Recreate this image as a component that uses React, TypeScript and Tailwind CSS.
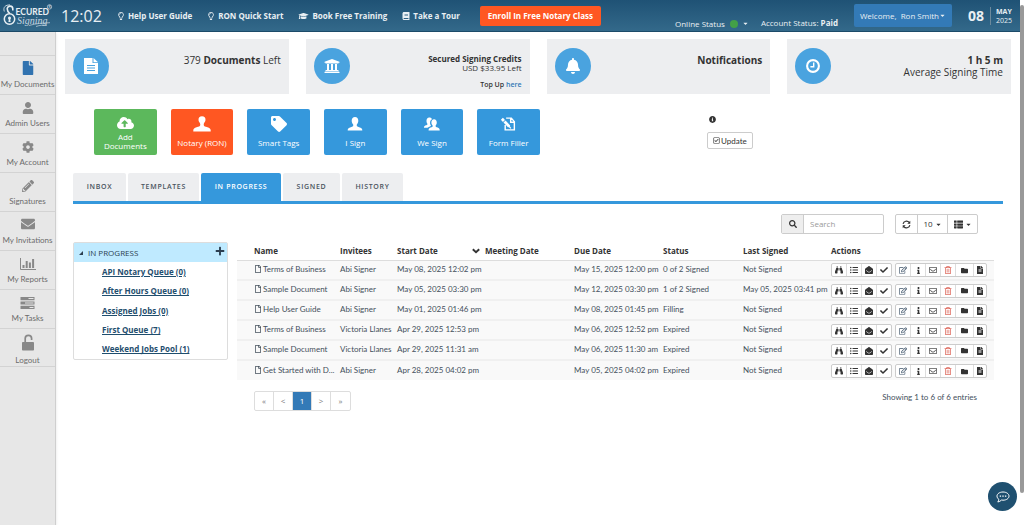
import type { ReactNode } from "react";
import type { IconType } from "react-icons";
import {
  FaBell, FaBinoculars, FaBook, FaCaretDown, FaCheck, FaCloudUploadAlt, FaCog, FaEnvelope,
  FaEnvelopeOpen, FaFile, FaFileAlt, FaFolder, FaGraduationCap, FaInfo, FaInfoCircle, FaListUl,
  FaPencilAlt, FaPlus, FaRegCheckSquare, FaRegEdit, FaRegEnvelope, FaRegFile, FaRegLightbulb,
  FaRegTrashAlt, FaSearch, FaTag, FaThList, FaUniversity, FaUser,
} from "react-icons/fa";

/* ---------- drawings ---------- */

function Logo() {
  return (
    <svg viewBox="0 0 50 24" className="h-6 w-[50px] shrink-0" role="img" aria-label="Secured Signing">
      <g fill="none" stroke="#e8eff3">
        <path d="M9.800 6.500V5a2.800 2.800 0 0 0-5.600-.2c0 2 .8 3.200 2.600 4.700" strokeWidth="1.600" />
        <path d="M1.300 7.500C-.2 3.200 2.500.8 7 .9" strokeWidth=".8" />
        <circle cx="6.500" cy="15" r="5.200" strokeWidth="1.500" />
        <circle cx="46.500" cy="2.900" r="2.200" strokeWidth=".6" />
        <path d="M26 21.500c7-2.200 14-2.300 21-2.800M33 22.500c4-1.400 7-1.500 11-1.200" strokeWidth=".6" />
      </g>
      <circle cx="6.500" cy="14" r="1.500" fill="#e8eff3" />
      <path d="M5.900 14.500h1.200l.5 3.500H5.400z" fill="#e8eff3" />
      <text x="12.500" y="11" fontSize="8.500" fill="#e8eff3" fontFamily="Lato, sans-serif" fontWeight="700">ECURED</text>
      <text x="14" y="20" fontSize="10" fill="#c6d6e0" fontFamily="Liberation Serif, serif" fontStyle="italic">Signing</text>
      <text x="45.400" y="4.200" fontSize="3.500" fill="#e8eff3" fontFamily="Lato, sans-serif">R</text>
    </svg>
  );
}

function DocIcon({ className }: { className?: string }) {
  return (
    <svg viewBox="0 0 16 16" className={className} aria-hidden="true">
      <path fillRule="evenodd" fill="currentColor" d="M1 0h8.500v5H15v11H1zM4 7v1h8V7zM4 9.500v1h8v-1zM4 12v1h8v-1z" />
      <path fill="currentColor" d="M10.500 0L15 4.200h-4.500z" />
    </svg>
  );
}

function StampIcon({ className }: { className?: string }) {
  return (
    <svg viewBox="0 0 18 16" className={className} fill="currentColor" aria-hidden="true">
      <path d="M9 .3a3.600 3.600 0 0 1 3.500 3.700c0 1.700-1.800 2.700-1.800 4.700 0 1.600 1.600 2 3.800 2.500 2 .5 3.200 1.500 3.200 3.200v1.200H.3v-1.200c0-1.700 1.200-2.700 3.200-3.200C5.700 10.700 7.300 10.300 7.300 8.700c0-2-1.800-3-1.800-4.700A3.600 3.600 0 0 1 9 .3z" />
    </svg>
  );
}

function PersonIcon({ className }: { className?: string }) {
  return (
    <svg viewBox="0 0 16 16" className={className} fill="currentColor" aria-hidden="true">
      <path d="M8 1c2.100 0 3.300 1.500 3.300 3.800 0 1.500-.6 2.900-1.500 3.700v1.400c.5.800 2.800 1.100 4.300 2.100.8.500 1.200 1.100 1.200 2.500H.7c0-1.400.4-2 1.200-2.500 1.500-1 3.800-1.300 4.300-2.100V8.500C5.300 7.700 4.700 6.300 4.700 4.800 4.700 2.500 5.900 1 8 1z" />
    </svg>
  );
}

function PeopleIcon({ className }: { className?: string }) {
  return (
    <svg viewBox="0 0 18 16" className={className} fill="currentColor" aria-hidden="true">
      <path d="M6.500 1C8 1 9.300 1.600 9.500 3 7.800 3.800 7.300 5.500 7.500 7.400c.1 1 .5 1.800 1 2.400-.6.900-2.700 1.200-3.700 2.100H1c0-1.400.6-1.900 2-2.500 1-.4 1.800-.8 1.800-1.500C4 7.200 3.700 5.900 3.700 4.600 3.700 2.300 4.800 1 6.500 1z" />
      <path d="M11.700 3c1.900 0 2.900 1.400 2.900 3.400 0 1.300-.5 2.400-1.200 3.100v1.100c.4.700 1.800.9 3.100 1.600.9.500 1.200 1.200 1.200 2.800H5.900c0-1.600.3-2.300 1.200-2.800 1.300-.7 2.700-.9 3.100-1.600V9.500C9.400 8.800 8.900 7.700 8.900 6.400 8.900 4.400 9.900 3 11.700 3z" />
    </svg>
  );
}

function FormIcon({ className }: { className?: string }) {
  return (
    <svg viewBox="0 0 18 16" className={className} fill="none" stroke="currentColor" aria-hidden="true">
      <path d="M5.500 9v5.200h9.700V5.500L12 1.800H6.500M11.300 2v4.200h3.900" strokeWidth="1.500" />
      <path d="M2 2.500l2.200 2.300M4.800 5.400l5 5.300" strokeWidth="3" />
      <path d="M9.500 10.400l2 2.200" strokeWidth="1.300" />
    </svg>
  );
}

function ClockIcon({ className }: { className?: string }) {
  return (
    <svg viewBox="0 0 16 16" className={className} fill="none" stroke="currentColor" aria-hidden="true">
      <circle cx="8" cy="8" r="5.900" strokeWidth="2.100" />
      <path d="M8.700 4.500v4.300H5.400" strokeWidth="1.400" />
    </svg>
  );
}

function ChartIcon({ className }: { className?: string }) {
  return (
    <svg viewBox="0 0 16 12" className={className} aria-hidden="true">
      <path d="M.5 0v11.500H16" fill="none" stroke="currentColor" />
      <path d="M2.500 7h2v3h-2zM5.700 3h2v7h-2zM8.900 4.500h2V10h-2zM12.100 1h2v9h-2z" fill="currentColor" />
    </svg>
  );
}

function TasksIcon({ className }: { className?: string }) {
  return (
    <svg viewBox="0 0 15 12" className={className} fill="currentColor" aria-hidden="true">
      <path fillRule="evenodd" d="M.5 0h14v3.200H.5zM8.500 1.100v1h5v-1zM.5 4.400h14v3.200H.5zM5 5.500v1h8.500v-1zM.5 8.800h14V12H.5zM9.500 9.900v1h4v-1z" />
    </svg>
  );
}

function UnlockIcon({ className }: { className?: string }) {
  return (
    <svg viewBox="0 0 14 17" className={className} aria-hidden="true">
      <path d="M4.200 9V4.500a3.200 3.200 0 0 1 6.400 0V6" fill="none" stroke="currentColor" strokeWidth="1.700" />
      <rect x="1" y="8" width="12" height="8.500" rx=".8" fill="currentColor" />
    </svg>
  );
}

function RefreshIcon({ className }: { className?: string }) {
  return (
    <svg viewBox="0 0 10 10" className={className} aria-hidden="true">
      <path d="M1.200 4.300A3.900 3.900 0 0 1 8 2.700M8.800 5.700A3.900 3.900 0 0 1 2 7.300" fill="none" stroke="currentColor" strokeWidth="1.300" />
      <path d="M9.200.8v3.300H5.900zM.8 9.200V5.900h3.300z" fill="currentColor" />
    </svg>
  );
}

function ChatIcon({ className }: { className?: string }) {
  return (
    <svg viewBox="0 0 14 12" className={className} fill="none" stroke="currentColor" strokeWidth="1" aria-hidden="true">
      <path d="M7 1c3.400 0 6 1.800 6 4.100S10.400 9.200 7 9.200c-.5 0-1-.1-1.400-.2C4.500 10 3.300 10.800 1.800 11c.6-.7.9-1.500 1-2.600C1.700 7.600 1 6.400 1 5.100 1 2.800 3.600 1 7 1z" />
      <path d="M3.700 5.100h1.400M6.300 5.100h1.400M8.900 5.100h1.400" strokeWidth="1.400" />
    </svg>
  );
}

function SortIcon({ className }: { className?: string }) {
  return (
    <svg viewBox="0 0 8 6" className={className} fill="none" stroke="currentColor" strokeWidth="1.900" aria-hidden="true">
      <path d="M.8 1.200L4 4.300l3.200-3.100" />
    </svg>
  );
}

/* ---------- header ---------- */

function NavLink({ icon: Icon, size = "size-2", children }: { icon: IconType; size?: string; children: ReactNode }) {
  return (
    <a href="#" className="flex items-center gap-[3px] text-[8px] font-bold whitespace-nowrap text-[#e9eff3]">
      <Icon className={size} />
      {children}
    </a>
  );
}

function Header() {
  return (
    <header className="flex h-8 items-center border-b border-[#1c4b69] bg-linear-to-b from-[#1f5275] to-[#33698a] pr-2 pl-[3px] text-[#e9eff3]">
      <Logo />
      <time className="ml-2 w-14 text-[16px]">12:02</time>
      <nav className="flex items-center gap-[15px]">
        <NavLink icon={FaRegLightbulb}>Help User Guide</NavLink>
        <NavLink icon={FaRegLightbulb}>RON Quick Start</NavLink>
        <NavLink icon={FaGraduationCap} size="h-2 w-[11px]">Book Free Training</NavLink>
        <NavLink icon={FaBook}>Take a Tour</NavLink>
      </nav>
      <button className="ml-5 h-5 w-[121px] rounded-xs bg-[#ff5722] text-[8px] font-bold whitespace-nowrap text-white">
        Enroll In Free Notary Class
      </button>
      <div className="ml-auto flex items-center whitespace-nowrap">
        <button className="mt-4 flex items-center text-[8px]">
          Online Status
          <span className="ml-[5px] size-2 rounded-full bg-[#43a047]" />
          <FaCaretDown className="ml-1 size-[7px]" />
        </button>
        <span className="mt-[14px] ml-3 text-[8px]">
          Account Status: <b>Paid</b>
        </span>
        <button className="ml-4 flex h-[23px] w-[98px] items-center justify-center rounded-xs bg-[#337ab7] text-[8px] whitespace-pre">
          Welcome,  Ron Smith
          <FaCaretDown className="size-[7px]" />
        </button>
        <span className="ml-4 text-[14px] font-bold">08</span>
        <span className="ml-[6px] flex flex-col border-l border-[#6d8a9c] pl-[5px] text-[7px] leading-[9px]">
          <b>MAY</b>
          <span>2025</span>
        </span>
      </div>
    </header>
  );
}

/* ---------- sidebar ---------- */

type Drawing = (props: { className?: string }) => ReactNode;

const MENU: { label: string; icon: Drawing; size: string }[] = [
  { label: "My Documents", icon: FaFile, size: "size-[14px] text-[#3173b0]" },
  { label: "Admin Users", icon: FaUser, size: "size-3 text-[#888]" },
  { label: "My Account", icon: FaCog, size: "size-3 text-[#888]" },
  { label: "Signatures", icon: FaPencilAlt, size: "size-3 text-[#888]" },
  { label: "My Invitations", icon: FaEnvelope, size: "size-[14px] text-[#888]" },
  { label: "My Reports", icon: ChartIcon, size: "h-3 w-4 text-[#888]" },
  { label: "My Tasks", icon: TasksIcon, size: "h-3 w-[15px] text-[#888]" },
  { label: "Logout", icon: UnlockIcon, size: "h-[17px] w-[14px] text-[#888]" },
];

function Sidebar() {
  return (
    <nav className="w-14 shrink-0 border-r border-[#cfcfcf] bg-[#e7e7e7] pt-[23px] shadow-sm">
      {MENU.map(({ label, icon: Icon, size }) => (
        <a
          key={label}
          href="#"
          className="flex min-h-[39px] flex-col items-center justify-end gap-[3px] border-t border-[#d3d3d3] pb-1 font-['Lato',sans-serif] text-[8px] leading-3 whitespace-nowrap text-[#6c6c6c] last:border-b last:pb-0"
        >
          <Icon className={size} />
          {label}
        </a>
      ))}
    </nav>
  );
}

/* ---------- summary cards ---------- */

function Card({ icon: Icon, children }: { icon: Drawing; children: ReactNode }) {
  return (
    <section className="flex h-[55px] items-start justify-between bg-[#edeef0] px-2 text-right text-[#333]">
      <span className="mt-[9px] flex size-9 items-center justify-center rounded-full bg-[#4aa3df] text-white">
        <Icon className="size-4" />
      </span>
      <div className="mt-[15px]">{children}</div>
    </section>
  );
}

function Cards() {
  return (
    <div className="grid grid-cols-4 gap-[17px]">
      <Card icon={DocIcon}>
        <p className="text-[10px] leading-3">379 <b>Documents</b> Left</p>
      </Card>
      <Card icon={FaUniversity}>
        <p className="text-[8px] leading-[9px] font-bold">Secured Signing Credits</p>
        <p className="text-[8px] leading-[9px]">USD $33.95 Left</p>
        <p className="mt-2 text-[7px] leading-[9px] font-semibold">Top Up <a href="#" className="text-[#337ab7]">here</a></p>
      </Card>
      <Card icon={FaBell}>
        <p className="text-[10px] leading-3 font-bold">Notifications</p>
      </Card>
      <Card icon={ClockIcon}>
        <p className="text-[10px] leading-3 font-bold">1 h 5 m</p>
        <p className="text-[10px] leading-3">Average Signing Time</p>
      </Card>
    </div>
  );
}

/* ---------- action tiles ---------- */

const TILES: { label: string; icon: Drawing; size: string; color: string }[] = [
  { label: "Add Documents", icon: FaCloudUploadAlt, size: "h-[14px] w-[17px]", color: "bg-[#5cb85c] gap-[2px] leading-[9px]" },
  { label: "Notary (RON)", icon: StampIcon, size: "h-4 w-[18px]", color: "bg-[#ff5722] gap-[5px] leading-3 whitespace-nowrap" },
  { label: "Smart Tags", icon: FaTag, size: "size-4", color: "bg-[#3598dc] gap-[5px] leading-3" },
  { label: "I Sign", icon: PersonIcon, size: "size-4", color: "bg-[#3598dc] gap-[5px] leading-3" },
  { label: "We Sign", icon: PeopleIcon, size: "h-4 w-[17px]", color: "bg-[#3598dc] gap-[5px] leading-3" },
  { label: "Form Filler", icon: FormIcon, size: "h-4 w-[17px]", color: "bg-[#3598dc] gap-[5px] leading-3" },
];

function Tiles() {
  return (
    <div className="mt-[15px] flex h-[46px] pl-[29px]">
      <div className="grid w-[446px] grid-cols-6 gap-[14px]">
        {TILES.map(({ label, icon: Icon, size, color }) => (
          <button key={label} className={`flex flex-col items-center rounded-xs px-1 pt-[7px] text-[8px] text-white ${color}`}>
            <Icon className={size} />
            {label}
          </button>
        ))}
      </div>
      <div className="ml-[167px] flex flex-col items-start pt-[7px] text-[#333]">
        <FaInfoCircle className="ml-[2px] size-[7px]" />
        <button className="mt-[9px] flex h-[17px] items-center gap-px rounded-xs border border-[#ccc] bg-white px-[5px] font-['Lato',sans-serif] text-[8px]">
          <FaRegCheckSquare className="size-[7px]" />
          Update
        </button>
      </div>
    </div>
  );
}

/* ---------- tabs ---------- */

const TABS = [
  { label: "INBOX", width: "w-[53px]" },
  { label: "TEMPLATES", width: "w-[71px]" },
  { label: "IN PROGRESS", width: "w-[80px]" },
  { label: "SIGNED", width: "w-[57px]" },
  { label: "HISTORY", width: "w-[61px]" },
];

function Tabs() {
  return (
    <div role="tablist" className="mt-[18px] flex gap-[2px] border-b-3 border-[#3598dc]">
      {TABS.map(({ label, width }) => (
        <button
          key={label}
          role="tab"
          aria-selected={label === "IN PROGRESS"}
          className={`h-7 rounded-t-xs bg-[#edeef0] text-[7px] font-semibold tracking-widest whitespace-nowrap text-[#4a545e] aria-selected:bg-[#3598dc] aria-selected:text-white ${width}`}
        >
          {label}
        </button>
      ))}
    </div>
  );
}

/* ---------- toolbar ---------- */

function Toolbar() {
  return (
    <div className="mt-[10px] flex h-5 justify-end gap-[11px] pr-[25px] text-[#333]">
      <form className="flex w-[103px] rounded-xs border border-[#ccc]">
        <label htmlFor="search" className="flex w-[22px] shrink-0 items-center justify-center border-r border-[#ccc] bg-[#eee]">
          <FaSearch className="size-2" aria-label="Search" />
        </label>
        <input id="search" placeholder="Search" className="w-full min-w-0 px-[6px] text-[8px] outline-none placeholder:text-[#999]" />
      </form>
      <div className="flex divide-x divide-[#ccc] rounded-xs border border-[#ccc] text-[8px]">
        <button aria-label="Refresh" className="flex w-[22px] items-center justify-center"><RefreshIcon className="size-[9px]" /></button>
        <button className="flex w-[30px] items-center justify-center gap-[2px]">10<FaCaretDown className="size-[7px]" /></button>
        <button aria-label="Columns" className="flex w-[29px] items-center justify-center gap-[2px]">
          <FaThList className="size-[9px]" /><FaCaretDown className="size-[7px]" />
        </button>
      </div>
    </div>
  );
}

/* ---------- queues ---------- */

const QUEUES = ["API Notary Queue (0)", "After Hours Queue (0)", "Assigned Jobs (0)", "First Queue (7)", "Weekend Jobs Pool (1)"];

function Queues() {
  return (
    <section className="flex h-[118px] w-[155px] shrink-0 flex-col rounded-xs border border-[#ddd] text-[#2c3e50]">
      <h2 className="flex h-[19px] items-center bg-[#bfeaff] pr-[2px] pl-1 text-[8px]">
        <svg viewBox="0 0 5 5" className="mr-[5px] size-[5px]" fill="currentColor" aria-hidden="true"><path d="M5 1v4H1z" /></svg>
        IN PROGRESS
        <button aria-label="Add queue" className="mb-[3px] ml-auto"><FaPlus className="size-[10px]" /></button>
      </h2>
      <ul className="flex flex-1 flex-col pl-7 text-[8px] font-bold text-[#1f4e6e]">
        {QUEUES.map((name) => (
          <li key={name} className="flex flex-1 items-center"><a href="#" className="underline">{name}</a></li>
        ))}
      </ul>
    </section>
  );
}

/* ---------- table ---------- */

const ROWS = [
  ["Terms of Business", "Abi Signer", "May 08, 2025 12:02 pm", "May 15, 2025 12:00 pm", "0 of 2 Signed", "Not Signed"],
  ["Sample Document", "Abi Signer", "May 05, 2025 03:30 pm", "May 12, 2025 03:30 pm", "1 of 2 Signed", "May 05, 2025 03:41 pm"],
  ["Help User Guide", "Abi Signer", "May 01, 2025 01:46 pm", "May 08, 2025 01:45 pm", "Filling", "Not Signed"],
  ["Terms of Business", "Victoria Llanes", "Apr 29, 2025 12:53 pm", "May 06, 2025 12:52 pm", "Expired", "Not Signed"],
  ["Sample Document", "Victoria Llanes", "Apr 29, 2025 11:31 am", "May 06, 2025 11:30 am", "Expired", "Not Signed"],
  ["Get Started with D...", "Abi Signer", "Apr 28, 2025 04:02 pm", "May 05, 2025 04:02 pm", "Expired", "Not Signed"],
];

type Action = { name: string; icon: IconType; style: string };

const ACTIONS_A: Action[] = [
  { name: "View", icon: FaBinoculars, style: "w-[15px]" },
  { name: "Details", icon: FaListUl, style: "w-[15px]" },
  { name: "Open message", icon: FaEnvelopeOpen, style: "w-[15px]" },
  { name: "Complete", icon: FaCheck, style: "w-[14px]" },
];
const ACTIONS_B: Action[] = [
  { name: "Edit", icon: FaRegEdit, style: "w-[15px] text-[#40556a]" },
  { name: "Info", icon: FaInfo, style: "w-[15px]" },
  { name: "Email", icon: FaRegEnvelope, style: "w-[15px] text-[#555]" },
  { name: "Delete", icon: FaRegTrashAlt, style: "w-[15px] text-[#de6b5f]" },
  { name: "Folder", icon: FaFolder, style: "w-[18px]" },
  { name: "File", icon: FaFileAlt, style: "w-3" },
];

function ActionGroup({ actions }: { actions: Action[] }) {
  return (
    <div className="flex h-[14px] divide-x divide-[#ddd] rounded-xs border border-[#ccc] bg-white text-[#333]">
      {actions.map(({ name, icon: Icon, style }) => (
        <button key={name} aria-label={name} className={`flex items-center justify-center ${style}`}>
          <Icon className={name === "Info" || name === "Folder" ? "size-[7px]" : "size-2"} />
        </button>
      ))}
    </div>
  );
}

function Documents() {
  return (
    <table className="w-full table-fixed border-collapse text-left text-[8px] whitespace-nowrap text-[#44505c]">
      <colgroup>
        <col className="w-[103px]" />
        <col className="w-[57px]" />
        <col className="w-[88px]" />
        <col className="w-[89px]" />
        <col className="w-[89px]" />
        <col className="w-[80px]" />
        <col className="w-[88px]" />
        <col />
      </colgroup>
      <thead className="text-[#333]">
        <tr className="h-[18px] border-b border-[#ddd]">
          <th scope="col" className="pl-[17px]">Name</th>
          <th scope="col">Invitees</th>
          <th scope="col">
            <span className="flex items-center justify-between pr-[5px]">Start Date<SortIcon className="h-[6px] w-2" /></span>
          </th>
          <th scope="col">Meeting Date</th>
          <th scope="col">Due Date</th>
          <th scope="col">Status</th>
          <th scope="col">Last Signed</th>
          <th scope="col">Actions</th>
        </tr>
      </thead>
      <tbody className="font-['Lato',sans-serif]">
        {ROWS.map(([name, invitee, start, due, status, signed]) => (
          <tr key={start} className="h-5 border-b-2 border-[#f0f0f0] bg-[#f9f9f9] last:border-b-0">
            <td className="pb-[2px] pl-[17px]">
              <a href="#" className="flex items-center gap-px"><FaRegFile className="size-2 shrink-0" />{name}</a>
            </td>
            <td className="pb-[2px]">{invitee}</td>
            <td className="pb-[2px]">{start}</td>
            <td />
            <td className="pb-[2px]">{due}</td>
            <td className="pb-[2px]">{status}</td>
            <td className="pb-[2px]">{signed}</td>
            <td>
              <div className="flex gap-[3px] pt-px">
                <ActionGroup actions={ACTIONS_A} />
                <ActionGroup actions={ACTIONS_B} />
              </div>
            </td>
          </tr>
        ))}
      </tbody>
    </table>
  );
}

function Footer() {
  return (
    <div className="mt-[11px] flex items-start justify-between px-[17px] text-[8px] text-[#44505c]">
      <nav aria-label="Pages" className="flex h-5 divide-x divide-[#ddd] rounded-xs border border-[#ddd] text-[#777]">
        {["«", "<", "1", ">", "»"].map((page) => (
          <button key={page} aria-current={page === "1" ? "page" : undefined} className="w-[19px] aria-[current=page]:bg-[#337ab7] aria-[current=page]:text-white">
            {page}
          </button>
        ))}
      </nav>
      <p className="font-['Lato',sans-serif]">Showing 1 to 6 of 6 entries</p>
    </div>
  );
}

export default function App() {
  return (
    <div className="flex min-h-screen bg-white font-['Open_Sans','Noto_Sans',sans-serif]">
      <div className="flex min-w-0 flex-1 flex-col">
        <Header />
        <div className="flex flex-1">
          <Sidebar />
          <main className="min-w-0 flex-1 px-[9px] pt-[7px]">
            <Cards />
            <Tiles />
            <div className="px-2">
              <Tabs />
              <Toolbar />
              <div className="mt-2 flex items-start gap-[9px]">
                <Queues />
                <div className="min-w-0 flex-1 pr-[9px]">
                  <Documents />
                  <Footer />
                </div>
              </div>
            </div>
          </main>
        </div>
      </div>
      <div className="w-1 shrink-0 pt-[5px]" aria-hidden="true">
        <div className="h-[93vh] rounded-xs bg-[#999]" />
      </div>
      <button aria-label="Chat" className="fixed right-[7px] bottom-[14px] flex size-[29px] items-center justify-center rounded-full bg-[#1f5070] text-white">
        <ChatIcon className="h-3 w-[14px]" />
      </button>
    </div>
  );
}
